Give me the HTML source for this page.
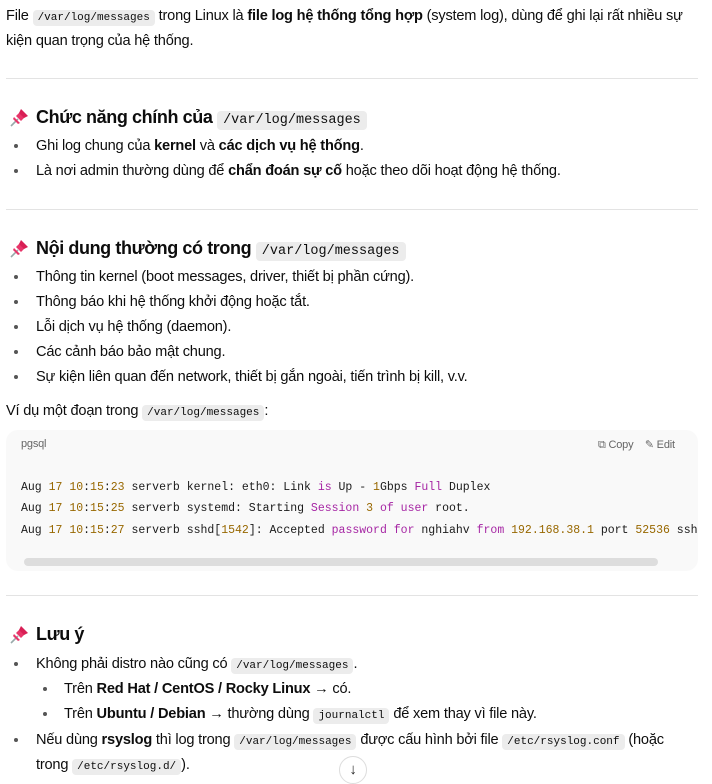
<!DOCTYPE html><html><head><meta charset="utf-8"><style>
*{margin:0;padding:0;box-sizing:border-box}
body{width:712px;height:784px;overflow:hidden;background:#fff;font-family:"Liberation Sans","DejaVu Sans",sans-serif;font-size:14.6px;color:#0d0d0d;position:relative;letter-spacing:-0.2px}
.l{position:absolute;white-space:nowrap;line-height:18px}
b{font-weight:bold}
code{font-family:"Liberation Mono",monospace;font-size:11px;background:#ececec;border-radius:4px;padding:2px 5px;letter-spacing:0}
.h{position:absolute;white-space:nowrap;font-size:18px;font-weight:bold;line-height:24px;left:36px;letter-spacing:-0.4px}
.h code{font-size:13.5px;font-weight:normal;padding:2px 6px}
.hr{position:absolute;left:6px;width:692px;height:1px;background:#e3e3e3}
.dot{position:absolute;width:4px;height:4px;border-radius:50%;background:#555}
.pin{position:absolute;left:9px}
.cb{position:absolute;left:6px;top:430px;width:692px;height:141px;background:#f9f9f9;border-radius:12px;overflow:hidden}
.cl{position:absolute;left:15px;font-family:"Liberation Mono",monospace;font-size:11.5px;white-space:pre;letter-spacing:0;color:#1a1a1a}
.n{color:#986801}.k{color:#a626a4}
</style></head><body>
<div class="l" style="left:6px;top:7px">File <code>/var/log/messages</code> trong Linux là <b>file log hệ thống tổng hợp</b> (system log), dùng để ghi lại rất nhiều sự</div>
<div class="l" style="left:6px;top:32px">kiện quan trọng của hệ thống.</div>
<div class="hr" style="top:78px"></div>

<svg class="pin" style="top:108px" width="20" height="20" viewBox="0 0 20 20"><line x1="2" y1="18" x2="9" y2="11" stroke="#9aa" stroke-width="1.6"/><path d="M7 8 L12 3 L17 8 L12 13 Z" fill="#e8356a"/><path d="M10 5 L12 1 L19 8 L15 10 Z" fill="#d81f55"/><path d="M5 9 L11 15 L9 16 L4 11Z" fill="#e8356a"/></svg>
<div class="h" style="top:105px">Chức năng chính của <code>/var/log/messages</code></div>
<div class="dot" style="left:14px;top:144px"></div><div class="l" style="left:36px;top:137px">Ghi log chung của <b>kernel</b> và <b>các dịch vụ hệ thống</b>.</div>
<div class="dot" style="left:14px;top:169px"></div><div class="l" style="left:36px;top:162px">Là nơi admin thường dùng để <b>chẩn đoán sự cố</b> hoặc theo dõi hoạt động hệ thống.</div>
<div class="hr" style="top:209px"></div>

<svg class="pin" style="top:239px" width="20" height="20" viewBox="0 0 20 20"><line x1="2" y1="18" x2="9" y2="11" stroke="#9aa" stroke-width="1.6"/><path d="M7 8 L12 3 L17 8 L12 13 Z" fill="#e8356a"/><path d="M10 5 L12 1 L19 8 L15 10 Z" fill="#d81f55"/><path d="M5 9 L11 15 L9 16 L4 11Z" fill="#e8356a"/></svg>
<div class="h" style="top:236px">Nội dung thường có trong <code>/var/log/messages</code></div>
<div class="dot" style="left:14px;top:275px"></div><div class="l" style="left:36px;top:268px">Thông tin kernel (boot messages, driver, thiết bị phần cứng).</div>
<div class="dot" style="left:14px;top:300px"></div><div class="l" style="left:36px;top:293px">Thông báo khi hệ thống khởi động hoặc tắt.</div>
<div class="dot" style="left:14px;top:325px"></div><div class="l" style="left:36px;top:318px">Lỗi dịch vụ hệ thống (daemon).</div>
<div class="dot" style="left:14px;top:350px"></div><div class="l" style="left:36px;top:343px">Các cảnh báo bảo mật chung.</div>
<div class="dot" style="left:14px;top:375px"></div><div class="l" style="left:36px;top:368px">Sự kiện liên quan đến network, thiết bị gắn ngoài, tiến trình bị kill, v.v.</div>
<div class="l" style="left:6px;top:402px">Ví dụ một đoạn trong <code>/var/log/messages</code>:</div>

<div class="cb">
<div style="position:absolute;left:15px;top:8px;font-size:11px;color:#666">pgsql</div>
<div style="position:absolute;left:592px;top:8px;font-size:11px;color:#666">⧉ Copy &nbsp;&nbsp; ✎ Edit</div>
<div class="cl" style="top:51px">Aug <span class="n">17</span> <span class="n">10</span>:<span class="n">15</span>:<span class="n">23</span> serverb kernel: eth0: Link <span class="k">is</span> Up - <span class="n">1</span>Gbps <span class="k">Full</span> Duplex</div>
<div class="cl" style="top:72px">Aug <span class="n">17</span> <span class="n">10</span>:<span class="n">15</span>:<span class="n">25</span> serverb systemd: Starting <span class="k">Session</span> <span class="n">3</span> <span class="k">of</span> <span class="k">user</span> root.</div>
<div class="cl" style="top:94px">Aug <span class="n">17</span> <span class="n">10</span>:<span class="n">15</span>:<span class="n">27</span> serverb sshd[<span class="n">1542</span>]: Accepted <span class="k">password</span> <span class="k">for</span> nghiahv <span class="k">from</span> <span class="n">192.168.38.1</span> port <span class="n">52536</span> ssh2</div>
<div style="position:absolute;left:18px;top:128px;width:634px;height:8px;border-radius:4px;background:#ddd"></div>
</div>
<div class="hr" style="top:595px"></div>

<svg class="pin" style="top:625px" width="20" height="20" viewBox="0 0 20 20"><line x1="2" y1="18" x2="9" y2="11" stroke="#9aa" stroke-width="1.6"/><path d="M7 8 L12 3 L17 8 L12 13 Z" fill="#e8356a"/><path d="M10 5 L12 1 L19 8 L15 10 Z" fill="#d81f55"/><path d="M5 9 L11 15 L9 16 L4 11Z" fill="#e8356a"/></svg>
<div class="h" style="top:622px">Lưu ý</div>
<div class="dot" style="left:14px;top:662px"></div><div class="l" style="left:36px;top:655px">Không phải distro nào cũng có <code>/var/log/messages</code>.</div>
<div class="dot" style="left:43px;top:687px"></div><div class="l" style="left:64px;top:680px">Trên <b>Red Hat / CentOS / Rocky Linux</b> → có.</div>
<div class="dot" style="left:43px;top:712px"></div><div class="l" style="left:64px;top:705px">Trên <b>Ubuntu / Debian</b> → thường dùng <code>journalctl</code> để xem thay vì file này.</div>
<div class="dot" style="left:14px;top:738px"></div><div class="l" style="left:36px;top:731px">Nếu dùng <b>rsyslog</b> thì log trong <code>/var/log/messages</code> được cấu hình bởi file <code>/etc/rsyslog.conf</code> (hoặc</div>
<div class="l" style="left:36px;top:756px">trong <code>/etc/rsyslog.d/</code>).</div>
<div style="position:absolute;left:339px;top:756px;width:28px;height:28px;border-radius:50%;border:1px solid #ddd;background:#fff;text-align:center;line-height:26px;font-size:15px;color:#222">↓</div>
</body></html>
